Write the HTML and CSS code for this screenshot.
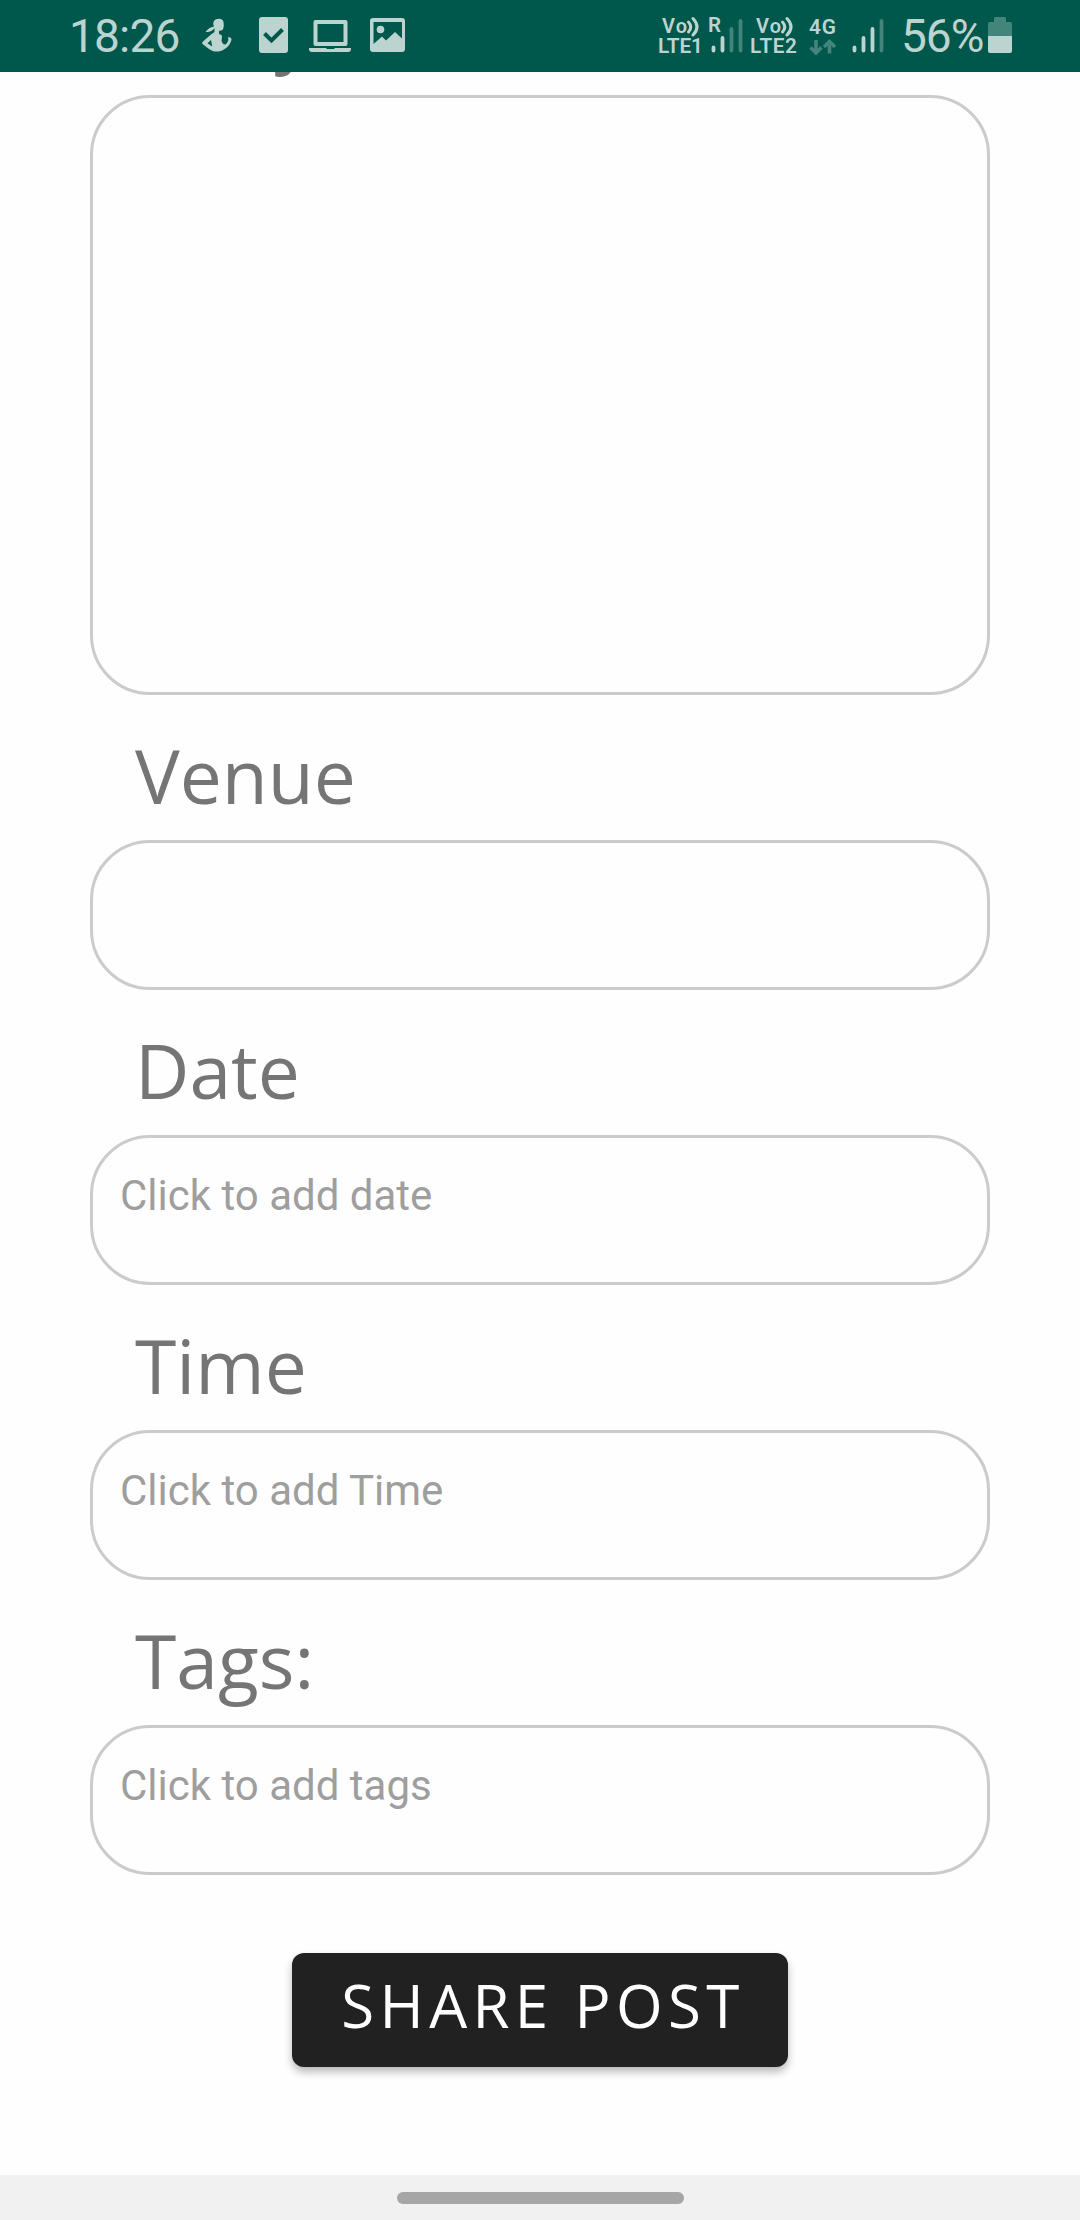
FILE: index.html
```html
<!DOCTYPE html>
<html lang="en">
<head>
<meta charset="utf-8">
<title>Share post</title>
<link rel="stylesheet" href="styles.css">
</head>
<body>
<header class="status">
  <span class="clock">18:26</span>
  <svg class="ic-figure" width="32" height="36" viewBox="0 0 32 36"><path d="M12 3C14 0 21 0 21.500 4c.5 3 .3 6-1 8l-3.500 1v3c2 .5 3 1 3 3l-.5 3.500C20 26 23 28 25 25l1.500-3-.5-2.500C28 18.500 30 20 29.300 22.500 28 27 25 30 21 32c-5 2.500-10 2-14-1L.5 26c-.8-1 0-2 1-3L9 16.500l3.500-2.500V10c-2 3-5 4.500-9 4C6 11 8 9 12 8.500 11 6 11 4.500 12 3z"/><path class="hole" d="M5.500 25.300l3.500-3.300 1.200 6.500z"/></svg>
  <svg class="ic-check" width="29" height="36" viewBox="0 0 29 36"><rect width="29" height="36" rx="3"/><path class="cut" d="M5.500 16.500l7 7L23.500 12.500"/></svg>
  <svg class="ic-laptop" width="42" height="32" viewBox="0 0 42 32"><path class="line" d="M6.500 2h30v22h-30z"/><path d="M0 28h17l1 1h7l1-1h16v1q0 3-3 3H3q-3 0-3-3z"/></svg>
  <svg class="ic-photo" width="35" height="34" viewBox="0 0 35 34"><path fill-rule="evenodd" d="M3 0h29q3 0 3 3v28q0 3-3 3H3q-3 0-3-3V3q0-3 3-3zM3.500 4v22l8.500-7.500 4 4 9-8.500 7 6.500V4z"/><circle cx="10.500" cy="11.500" r="3.800"/></svg>
  <svg class="ic-sim" width="248" height="42" viewBox="0 0 248 42">
    <g class="sim-text">
      <text x="3" y="17.500" font-size="20" textLength="25">Vo</text><text x="-1" y="37.500" font-size="20.800" textLength="45">LTE1</text>
      <text x="49" y="17" font-size="20.500">R</text>
      <text x="97" y="17.500" font-size="20" textLength="25">Vo</text><text x="91" y="37.500" font-size="20.800" textLength="47">LTE2</text>
      <text x="150" y="19" font-size="20.800" textLength="27">4G</text>
    </g>
    <g class="wave"><path d="M29.500 7q4.500 5 0 10M34 3.500q8 8.500 0 16.500M123.500 7q4.500 5 0 10M128 3.500q8 8.500 0 16.500"/></g>
    <g class="bars"><path d="M54.500 32.400v3.200M63.500 23v12.600M195.500 32.400v3.200M204.500 23v12.600M213.500 14v21.600"/><path class="dim" d="M72.500 14v21.600M81.500 6v29.600M222.500 6v29.600"/></g>
    <g class="arrows"><path d="M157 25v12.500M151.500 32.500l5.500 5.500 5.500-5.500M170.500 38.500V26M165 32l5.500-5.500 5.500 5.500"/></g>
  </svg>
  <span class="level">56%</span>
  <svg class="ic-battery" width="24" height="36" viewBox="0 0 24 36"><path class="faded" d="M6 1q0-1 1-1h10q1 0 1 1v4h4q2 0 2 2v12H0V7q0-2 2-2h4z"/><path d="M0 19h24v15q0 2-2 2H2q-2 0-2-2z"/></svg>
</header>
<main class="form">
  <label class="label">Body</label>
  <div class="field tall"></div>
  <label class="label">Venue</label>
  <div class="field"></div>
  <label class="label">Date</label>
  <div class="field">Click to add date</div>
  <label class="label">Time</label>
  <div class="field">Click to add Time</div>
  <label class="label">Tags:</label>
  <div class="field">Click to add tags</div>
  <button class="share">SHARE POST</button>
</main>
<footer class="nav"><div class="pill"></div></footer>
</body>
</html>
```
FILE: styles.css
```css
* { box-sizing: border-box; }
body { margin: 0; width: 1080px; height: 2220px; display: flex; flex-direction: column; background: #fefefe; font-family: Roboto, sans-serif; overflow: hidden; }
.status { height: 72px; flex: none; background: #00574b; color: #bcd4d0; display: flex; align-items: flex-start; padding-left: 69px; }
.status svg { flex: none; fill: #bcd4d0; }
.clock, .level { font-size: 46px; line-height: 54px; margin-top: 9px; white-space: nowrap; }
.clock { width: 133px; letter-spacing: -0.8px; }
.status .ic-figure { margin-top: 18px; }
.status .hole { fill: #00574b; }
.ic-check { margin: 17px 0 0 25px; }
.status .cut { fill: none; stroke: #00574b; stroke-width: 4; }
.ic-laptop { margin: 20px 0 0 21px; }
.status .line { fill: none; stroke: #bcd4d0; stroke-width: 4; stroke-linejoin: round; }
.ic-photo { margin: 18px 0 0 19px; }
.ic-sim { margin: 15px 0 0 254px; overflow: visible; }
.sim-text { font-weight: 600; }
.wave { fill: none; stroke: #bcd4d0; stroke-width: 3; stroke-linecap: round; }
.bars { fill: none; stroke: #bcd4d0; stroke-width: 3.8; stroke-linecap: round; }
.dim, .arrows { stroke: #43857b; }
.arrows { fill: none; stroke-width: 3.6; }
.level { width: 87px; margin-left: -6px; letter-spacing: -1px; }
.ic-battery { margin: 17px 0 0 0; }
.status .faded { fill: #43857b; }
.form { flex: 1; min-height: 0; padding: 0 90px; display: flex; flex-direction: column; overflow: hidden; }
.label { flex: none; height: 145px; padding: 29px 0 0 45px; font: 75px/102px "Open Sans", sans-serif; color: #757575; }
.label:first-child { margin-top: -122px; }
.field { flex: none; height: 150px; border: 3px solid #cbcbcb; border-radius: 60px; padding: 33px 27px; font-size: 42px; line-height: 50px; color: #9e9e9e; }
.tall { height: 600px; }
.share { flex: none; align-self: center; width: 496px; height: 114px; margin-top: 78px; padding: 0 0 10px 6px; border: 0; border-radius: 12px; background: #212121; color: #fff; font: 60px/82px "Open Sans", sans-serif; letter-spacing: 5.36px; box-shadow: 0 5px 8px rgba(0,0,0,.28); white-space: nowrap; }
.nav { flex: none; height: 45px; background: #f1f1f1; display: flex; justify-content: center; align-items: center; }
.pill { width: 287px; height: 12px; border-radius: 6px; background: #a6a6a6; }
```
